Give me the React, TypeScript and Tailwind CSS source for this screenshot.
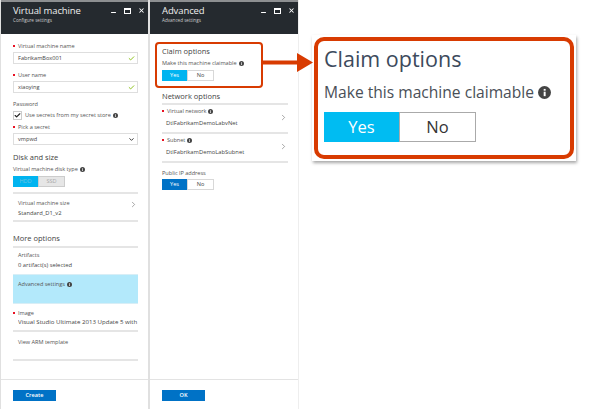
import { Check, ChevronDown, ChevronRight, Minus, X } from "lucide-react";

const font = { fontFamily: '"Open Sans", "Noto Sans", sans-serif' };

function InfoDot({ className = "h-[5px] w-[5px]" }: { className?: string }) {
  return (
    <svg className={`inline-block shrink-0 ${className}`} viewBox="0 0 16 16">
      <circle cx="8" cy="8" r="8" fill="#444" />
      <rect x="7" y="7" width="2.4" height="5.5" fill="#fff" />
      <rect x="7" y="3.6" width="2.4" height="2.2" fill="#fff" />
    </svg>
  );
}

function Label({ text, required, info }: { text: string; required?: boolean; info?: boolean }) {
  return (
    <div className="flex h-[8px] items-center gap-[2px] text-[5.6px] leading-[8px] tracking-[-0.03px] text-[#555]">
      {required && <span className="mr-[1px] h-[2px] w-[2px] bg-[#e81123]" />}
      <span className="whitespace-nowrap">{text}</span>
      {info && <InfoDot />}
    </div>
  );
}

function Input({ value }: { value: string }) {
  return (
    <div className="mt-[2px] flex h-[12px] items-center justify-between border border-[#dedede] pl-[4px] pr-[2px] text-[5.6px] text-[#444]">
      <span>{value}</span>
      <Check className="h-[7px] w-[7px] text-[#7fba00]" strokeWidth={3} />
    </div>
  );
}

function Sep({ className = "" }: { className?: string }) {
  return <div className={`h-[2px] bg-[#e5e5e5] ${className}`} />;
}

function Toggle({ on, off, active, muted }: { on: string; off: string; active: string; muted?: boolean }) {
  return (
    <div className={`flex h-[11px] w-[52px] text-[5.6px] ${muted ? "text-[#aaa]" : "text-[#444]"}`}>
      <div className={`flex flex-1 items-center justify-center ${active} ${muted ? "text-[#6fc3e0]" : "text-white"}`}>{on}</div>
      <div className={`flex flex-1 items-center justify-center border ${muted ? "border-[#ccc] bg-[#e6e6e6]" : "border-[#d8d8d8]"}`}>{off}</div>
    </div>
  );
}

function BladeHeader({ title, sub }: { title: string; sub: string }) {
  return (
    <div className="flex h-[34px] shrink-0 justify-between border-t-2 border-[#8d8f91] bg-[#252a2f] pl-[12px] pr-[3px] text-white">
      <div>
        <div className="mt-[2px] text-[9.5px] leading-[13px] tracking-[-0.1px] text-[#eee]">{title}</div>
        <div className="text-[4.6px] leading-[6px] text-[#ccc]">{sub}</div>
      </div>
      <div className="mt-[4px] flex h-[9px] items-center gap-[7px]">
        <Minus className="mt-[3px] h-[7px] w-[7px]" strokeWidth={3.5} />
        <div className="h-[6px] w-[7px] border border-t-2 border-white" />
        <X className="h-[7px] w-[7px]" strokeWidth={3.5} />
      </div>
    </div>
  );
}

function BladeFooter({ label }: { label: string }) {
  return (
    <div className="mt-auto h-[30px] shrink-0 border-t border-[#e3e3e3] pl-[12px] pt-[10px]">
      <div className="flex h-[11px] w-[43px] items-center justify-center bg-[#0072c6] text-[5.6px] font-semibold text-white">{label}</div>
    </div>
  );
}

function Title({ text, className = "" }: { text: string; className?: string }) {
  return <div className={`text-[7.5px] leading-[10px] text-[#444] ${className}`}>{text}</div>;
}

function LeftBlade() {
  return (
    <div className="flex h-[409px] w-[150px] shrink-0 flex-col border-l border-r-2 border-[#e0e0e0]">
      <BladeHeader title="Virtual machine" sub="Configure settings" />
      <div className="flex flex-1 flex-col px-[12px] pr-[10px] pt-[8px]">
        <Label text="Virtual machine name" required />
        <Input value="FabrikamBox001" />
        <div className="mt-[7px]">
          <Label text="User name" required />
        </div>
        <Input value="xiaoying" />
        <div className="mt-[7px]">
          <Label text="Password" />
        </div>
        <div className="mt-[3px] flex h-[9px] items-center gap-[2px] text-[5.6px] text-[#555]">
          <div className="flex h-[9px] w-[9px] items-center justify-center border border-[#ccc]">
            <Check className="h-[7px] w-[7px] text-[#222]" strokeWidth={4} />
          </div>
          <span className="ml-[1px]">Use secrets from my secret store</span>
          <InfoDot />
        </div>
        <div className="mt-[3px]">
          <Label text="Pick a secret" required />
        </div>
        <div className="mt-[2px] flex h-[12px] items-center justify-between border border-[#dedede] pl-[4px] pr-[2px] text-[5.6px] text-[#444]">
          <span>vmpwd</span>
          <ChevronDown className="h-[7px] w-[7px] text-[#222]" strokeWidth={3} />
        </div>
        <Title text="Disk and size" className="mt-[7px]" />
        <div className="mt-[3px]">
          <Label text="Virtual machine disk type" info />
        </div>
        <div className="mt-[3px]">
          <Toggle on="HDD" off="SSD" active="bg-[#00b4f0]" muted />
        </div>
        <Sep className="mt-[5px]" />
        <div className="relative h-[26px] pl-[5px] pt-[5px]">
          <Label text="Virtual machine size" />
          <div className="mt-[2px] text-[5.8px] leading-[8px] text-[#444]">Standard_D1_v2</div>
          <ChevronRight className="absolute right-[0px] top-[6px] h-[9px] w-[9px] text-[#666]" strokeWidth={1.5} />
        </div>
        <Sep />
        <Title text="More options" className="mt-[11px]" />
        <Sep className="mt-[3px]" />
        <div className="h-[26px] pl-[5px] pt-[3px]">
          <Label text="Artifacts" />
          <div className="mt-[2px] text-[5.8px] leading-[8px] text-[#444]">0 artifact(s) selected</div>
        </div>
        <div className="h-[30px] border-y border-[#d8eef6] bg-[#b3e9fb] pl-[5px] pt-[5px]">
          <Label text="Advanced settings" info />
        </div>
        <div className="mt-[5px]">
          <Label text="Image" required />
        </div>
        <div className="ml-[5px] mt-[1px] h-[8px] overflow-hidden whitespace-nowrap text-[6.1px] leading-[8px] text-[#444]">
          Visual Studio Ultimate 2013 Update 5 with
        </div>
        <Sep className="mt-[4px]" />
        <div className="h-[27px] pl-[5px] pt-[6px]">
          <Label text="View ARM template" />
        </div>
        <Sep />
      </div>
      <BladeFooter label="Create" />
    </div>
  );
}

function NetworkRow({ label, value }: { label: string; value: string }) {
  return (
    <div className="relative h-[27px] pt-[2px]">
      <Label text={label} required info />
      <div className="ml-[4px] mt-[4px] text-[5.8px] leading-[8px] text-[#444]">{value}</div>
      <ChevronRight className="absolute right-[0px] top-[8px] h-[9px] w-[9px] text-[#666]" strokeWidth={1.5} />
    </div>
  );
}

function RightBlade() {
  return (
    <div className="relative flex h-[409px] w-[149px] shrink-0 flex-col border-r border-[#eee]">
      <BladeHeader title="Advanced" sub="Advanced settings" />
      <div className="flex flex-1 flex-col pl-[12px] pr-[10px] pt-[12px]">
        <Title text="Claim options" />
        <div className="mt-[3px]">
          <Label text="Make this machine claimable" info />
        </div>
        <div className="mt-[3px]">
          <Toggle on="Yes" off="No" active="bg-[#00b4f0]" />
        </div>
        <Title text="Network options" className="mt-[10px]" />
        <Sep className="mt-[2px]" />
        <NetworkRow label="Virtual network" value="DtlFabrikamDemoLabvNet" />
        <Sep />
        <NetworkRow label="Subnet" value="DtlFabrikamDemoLabSubnet" />
        <Sep />
        <div className="mt-[6px]">
          <Label text="Public IP address" />
        </div>
        <div className="mt-[2px]">
          <Toggle on="Yes" off="No" active="bg-[#0072c6]" />
        </div>
      </div>
      <BladeFooter label="OK" />
      <div className="absolute left-[5px] top-[42px] h-[46px] w-[108px] rounded-[4px] border-2 border-[#d83b01]" />
    </div>
  );
}

function Callout() {
  return (
    <div className="ml-[13px] mt-[35px] h-[126px] w-[264px] shrink-0 bg-white p-[2px] shadow-[1px_2px_3px_rgba(0,0,0,0.35)]">
      <div className="h-full rounded-[10px] border-[4px] border-[#d83b01] px-[6px] pt-[2px]">
        <div className="text-[21.5px] leading-[32px] text-[#3c4a5c]">Claim options</div>
        <div className="mt-[4px] flex items-center gap-[4px] text-[15.6px] leading-[26px] text-[#4a4f57]">
          <span className="whitespace-nowrap">Make this machine claimable</span>
          <InfoDot className="h-[13px] w-[13px]" />
        </div>
        <div className="mt-[7px] flex h-[30px] w-[152px] text-[16.5px]">
          <div className="flex flex-1 items-center justify-center bg-[#00bcf2] text-white">Yes</div>
          <div className="flex flex-1 items-center justify-center border border-[#aaa] text-[#333]">No</div>
        </div>
      </div>
    </div>
  );
}

export default function App() {
  return (
    <div className="relative flex h-[410px] w-[593px] overflow-hidden bg-white" style={font}>
      <LeftBlade />
      <RightBlade />
      <Callout />
      {/* arrow from the highlighted box to the enlarged copy */}
      <svg className="absolute left-[262px] top-[52px] h-[21px] w-[52px]" viewBox="0 0 52 21">
        <path d="M0 8.5h35V1l16 9.5L35 20v-7.5H0z" fill="#d83b01" />
      </svg>
    </div>
  );
}
